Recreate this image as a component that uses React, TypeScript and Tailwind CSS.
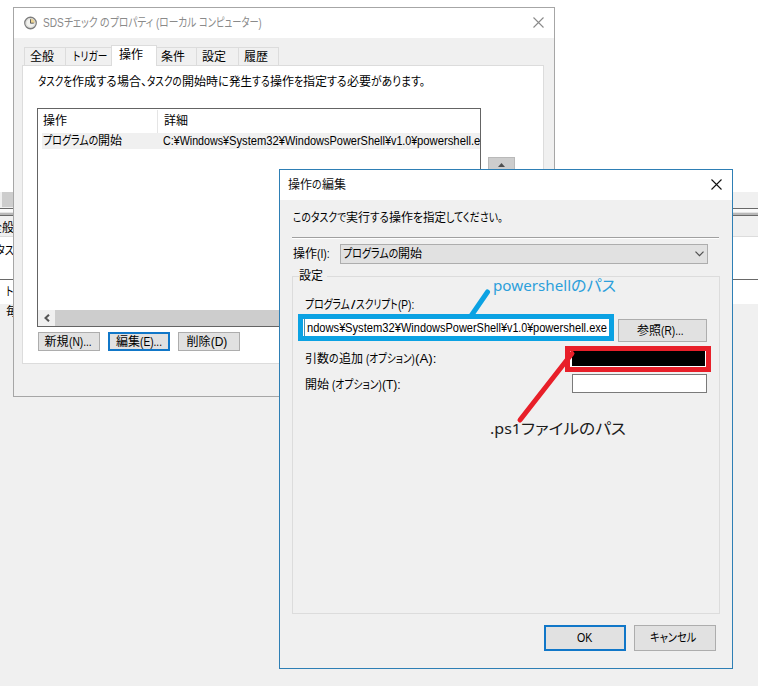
import { useLayoutEffect, useRef } from "react";

type Part = [string, number];

const UI = "font-['Liberation_Sans','Noto_Sans_CJK_JP',sans-serif]";

// One stretch of text, condensed or widened to the given advance width.
function Piece({ text, width }: { text: string; width: number }) {
  const ref = useRef<HTMLSpanElement>(null);
  useLayoutEffect(() => {
    const el = ref.current;
    if (el) el.style.transform = `scaleX(${width / el.offsetWidth})`;
  }, [text, width]);
  return (
    <span className="block shrink-0" style={{ width }}>
      <span ref={ref} className="inline-block origin-left whitespace-pre align-top [font-feature-settings:'palt']">
        {text}
      </span>
    </span>
  );
}

function Label({ parts, className = "" }: { parts: Part[]; className?: string }) {
  return (
    <div className={`flex h-4 shrink-0 text-[12px] leading-[17px] ${className}`}>
      {parts.map(([t, w], i) => (
        <Piece key={i} text={t} width={w} />
      ))}
    </div>
  );
}

function Button({ parts, className, primary = false }: { parts: Part[]; className: string; primary?: boolean }) {
  return (
    <button
      className={`flex items-center justify-center bg-[#e1e1e1] ${
        primary ? "border-2 border-[#1177c8]" : "border border-[#adadad]"
      } ${className}`}
    >
      <Label parts={parts} />
    </button>
  );
}

function Close({ color }: { color: string }) {
  return (
    <svg width="11" height="11" viewBox="0 0 11 11" fill="none" stroke={color} strokeWidth="1.1">
      <path d="M.5.5l10 10M10.5.5l-10 10" />
    </svg>
  );
}

function Backdrop() {
  return (
    <div className="flex h-full flex-col">
      <div className="h-[192px] bg-white" />
      <div className="h-4 bg-[#f0f0f0] pl-0.5">
        <div className="h-[15px] w-20 bg-[#cdcdcd]" />
      </div>
      <div className="h-px bg-[#696969]" />
      <div className="h-1 border-b border-[#e3e3e3] bg-[#fafafa]" />
      <div className="h-[3px] border-b border-[#696969] bg-[#b8b8b8]" />
      <div className="h-[21px] border-b border-[#dcdcdc] bg-[#f0f0f0] pt-1">
        <Label parts={[["全般", 24]]} className="-ml-2.5" />
      </div>
      <div className="h-[42px] bg-white pt-1.5">
        <Label parts={[["タスク", 27]]} className="-ml-1" />
      </div>
      <div className="h-px bg-[#696969]" />
      <div className="h-6 bg-white pl-1.5 pt-1">
        <Label parts={[["トリガー", 34]]} />
      </div>
      <div className="pl-1.5">
        <Label parts={[["毎日", 24]]} />
      </div>
    </div>
  );
}

function Tab({ parts, className, active = false }: { parts: Part[]; className: string; active?: boolean }) {
  return (
    <div
      className={`flex border border-b-0 border-[#dcdcdc] ${
        active ? "z-10 -mb-px h-[21px] bg-white pt-px" : "-ml-px h-[18px] bg-[#f0f0f0] pt-px"
      } ${className}`}
    >
      <Label parts={parts} />
    </div>
  );
}

function PropertiesWindow() {
  return (
    <section className="absolute left-[13px] top-[7px] flex h-[390px] w-[542px] flex-col border border-[#a6a6a6] bg-[#f0f0f0]">
      <header className="flex h-[30px] shrink-0 items-center bg-white pl-2.5 pr-2.5 text-[#8a8a8a]">
        <svg width="13" height="14" viewBox="0 0 14 14" fill="none" className="mr-1.5">
          <circle cx="7" cy="7" r="6.2" fill="#f2f2ee" stroke="#7d7d7d" strokeWidth="1.4" />
          <path d="M7 7V2.2A4.8 4.8 0 0 1 11.8 7Z" fill="#ecd493" />
          <circle cx="7" cy="7" r="4.8" stroke="#c5c5c5" strokeWidth=".6" />
          <path d="M7 3v4.2h3.5" stroke="#555" />
        </svg>
        <Label
          parts={[["SDS", 21], ["チェック ", 36], ["の", 10], ["プロパティ ", 46], ["(ローカル ", 43], ["コンピューター)", 63]]}
        />
        <span className="ml-auto pb-0.5">
          <Close color="#8a8a8a" />
        </span>
      </header>
      <div className="flex h-[27px] shrink-0 items-end pl-2.5">
        <Tab parts={[["全般", 24]]} className="ml-0 w-[42px] pl-[5px]" />
        <Tab parts={[["トリガー", 34]]} className="w-[47px] pl-[7px]" />
        <Tab parts={[["操作", 24]]} className="-ml-px w-[46px] pl-[7px]" active />
        <Tab parts={[["条件", 24]]} className="w-[41px] pl-1" />
        <Tab parts={[["設定", 24]]} className="w-[43px] pl-[5px]" />
        <Tab parts={[["履歴", 24]]} className="w-[41px] pl-[5px]" />
      </div>
      <div className="ml-2 flex h-[299px] w-[522px] flex-col border border-[#dcdcdc] bg-white pl-3.5 pt-2">
        <Label
          className="ml-px"
          parts={[
            ["タスクを", 34], ["作成", 24], ["する", 21], ["場合", 24], ["、", 6], ["タスクの", 35],
            ["開始時", 36], ["に", 11], ["発生", 23], ["する", 18], ["操作", 24], ["を", 9],
            ["指定", 24], ["する", 20], ["必要", 24], ["があります。", 54],
          ]}
        />
        <div className="mt-[18px] flex">
          <div className="flex h-[219px] w-[444px] flex-col overflow-hidden border border-[#646464]">
            <div className="flex h-6 shrink-0 pt-px">
              <div className="w-[120px] border-r border-[#e5e5e5] pl-[5px] pt-[3px]">
                <Label parts={[["操作", 24]]} />
              </div>
              <Label parts={[["詳細", 24]]} className="ml-[6px] mt-[3px]" />
            </div>
            <div className="ml-1 flex h-4 shrink-0 bg-[#f0f0f0]">
              <div className="w-[121px] shrink-0 pl-px">
                <Label parts={[["プログラムの", 55], ["開始", 24]]} />
              </div>
              <Label parts={[["C:¥Windows¥", 66], ["System32¥", 56], ["WindowsPowerShell¥", 106], ["v1.0¥", 26], ["powershell.e", 63]]} />
            </div>
            <div className="mt-auto flex h-4 bg-[#cdcdcd]">
              <div className="flex w-[17px] items-center justify-center bg-[#f0f0f0]">
                <svg width="6" height="8" viewBox="0 0 6 8" fill="none" stroke="#555" strokeWidth="2">
                  <path d="M5 .7L1.5 4 5 7.3" />
                </svg>
              </div>
            </div>
          </div>
          <div className="ml-[7px] mt-[49px] flex h-[26px] w-[27px] justify-center border border-[#b9b9b9] bg-[#cdcdcd] pt-[5px]">
            <svg width="7" height="4" viewBox="0 0 7 4" fill="#505050">
              <path d="M0 4L3.5 0 7 4Z" />
            </svg>
          </div>
        </div>
        <div className="ml-px mt-[5px] flex gap-2">
          <Button parts={[["新規", 24], ["(N)...", 23]]} className="h-[19px] w-[62px] pr-0.5" />
          <Button parts={[["編集", 24], ["(E)...", 22]]} className="h-[19px] w-[62px]" primary />
          <Button parts={[["削除", 24], ["(D)", 17]]} className="h-[19px] w-[62px] pr-1" />
        </div>
      </div>
    </section>
  );
}

function EditDialog() {
  return (
    <section className="absolute left-[279px] top-[169px] flex h-[500px] w-[454px] flex-col border border-[#2e7fb5] bg-[#f0f0f0]">
      <header className="flex h-[30px] shrink-0 items-center bg-white pl-2 pr-2.5 text-[#111]">
        <Label parts={[["操作", 24], ["の", 10], ["編集", 24]]} />
        <span className="ml-auto pb-0.5">
          <Close color="#111" />
        </span>
      </header>
      <Label
        className="ml-[13px] mt-2.5"
        parts={[["このタスクで", 53], ["実行", 24], ["する", 19], ["操作", 24], ["を", 10], ["指定", 23], ["してください。", 57]]}
      />
      <div className="ml-3 mt-[11px] h-0.5 w-[427px] shrink-0 border-b border-white bg-[#a0a0a0]" />
      <div className="ml-[13px] mt-[5px] flex shrink-0 items-center">
        <Label parts={[["操作", 24], ["(I):", 13]]} className="mr-[9px]" />
        <div className="ml-px flex h-5 w-[368px] items-center border border-[#adadad] bg-[#e1e1e1] pl-0.5 pr-[3px]">
          <Label parts={[["プログラムの", 55], ["開始", 24]]} />
          <svg width="9" height="6" viewBox="0 0 9 6" fill="none" stroke="#505050" strokeWidth="1.2" className="ml-auto">
            <path d="M.5.7l4 4 4-4" />
          </svg>
        </div>
      </div>
      <fieldset className="ml-3 mt-3 flex h-[338px] w-[428px] shrink-0 flex-col border border-[#dcdcdc]">
        <Label parts={[["設定", 24]]} className="-mt-[9px] ml-1.5 w-7 bg-[#f0f0f0]" />
        <Label parts={[["プログラム", 45], [" ", 1], ["/", 4], [" ", 1], ["スクリプト", 42], ["(P):", 16]]} className="ml-3 mt-[13px]" />
        <div className="ml-[5px] mt-px flex">
          <div className="flex h-[27px] w-[316px] items-center overflow-hidden border-[5px] border-[#0ba2e3] bg-white">
            <div className="mx-px h-full w-px bg-[#4a8fae]" />
            <Label
              className="ml-px"
              parts={[["ndows¥", 38], ["System32¥", 56], ["WindowsPowerShell¥", 106], ["v1.0¥", 26], ["powershell.exe", 74]]}
            />
          </div>
          <Button parts={[["参照", 24], ["(R)...", 23]]} className="ml-1 mt-[5px] h-[23px] w-[89px] pr-1" />
        </div>
        <div className="ml-3 mt-[4px] flex h-[26px]">
          <Label
            parts={[["引数", 24], ["の", 10], ["追加 ", 27], ["(オプション)", 49], ["(A):", 21]]}
            className="mt-[5px] w-[260px]"
          />
          <div className="h-[26px] w-[146px] border-[5px] border-[#e81f29] bg-white pb-px pl-0.5 pr-px">
            <div className="h-full bg-black" />
          </div>
        </div>
        <div className="ml-3 mt-0.5 flex">
          <Label parts={[["開始 ", 27], ["(オプション)", 50], ["(T):", 19]]} className="mt-[3px] w-[267px]" />
          <div className="h-[19px] w-[135px] border border-[#7a7a7a] bg-white" />
        </div>
      </fieldset>
      <footer className="mt-[11px] flex justify-end gap-2 pr-4">
        <Button parts={[["OK", 15]]} className="h-[26px] w-[82px] pr-0.5" primary />
        <Button parts={[["キャンセル", 46]]} className="h-[26px] w-[82px] pr-1" />
      </footer>
    </section>
  );
}

function Annotations() {
  return (
    <div className="pointer-events-none absolute inset-0 font-['Noto_Sans','Noto_Sans_CJK_JP',sans-serif] text-[15px] leading-5">
      <svg width="758" height="686" viewBox="0 0 758 686" className="absolute inset-0" strokeWidth="5" strokeLinecap="round">
        <path d="M487.5 292L471 316" stroke="#0ba2e3" />
        <path d="M572 353.5L520 420" stroke="#e81f29" />
      </svg>
      <div className="absolute left-[493px] top-[275px] flex text-[#2c9fdb]">
        <Piece text="powershell" width={78} />
        <Piece text="のパス" width={45} />
      </div>
      <div className="absolute left-[490px] top-[418px] flex text-[#1c1c1c]">
        <Piece text=".ps1" width={31} />
        <Piece text="ファイルのパス" width={105} />
      </div>
    </div>
  );
}

export default function App() {
  return (
    <main className={`relative h-[686px] w-[758px] overflow-hidden bg-[#f0f0f0] text-black ${UI}`}>
      <Backdrop />
      <PropertiesWindow />
      <EditDialog />
      <Annotations />
    </main>
  );
}
